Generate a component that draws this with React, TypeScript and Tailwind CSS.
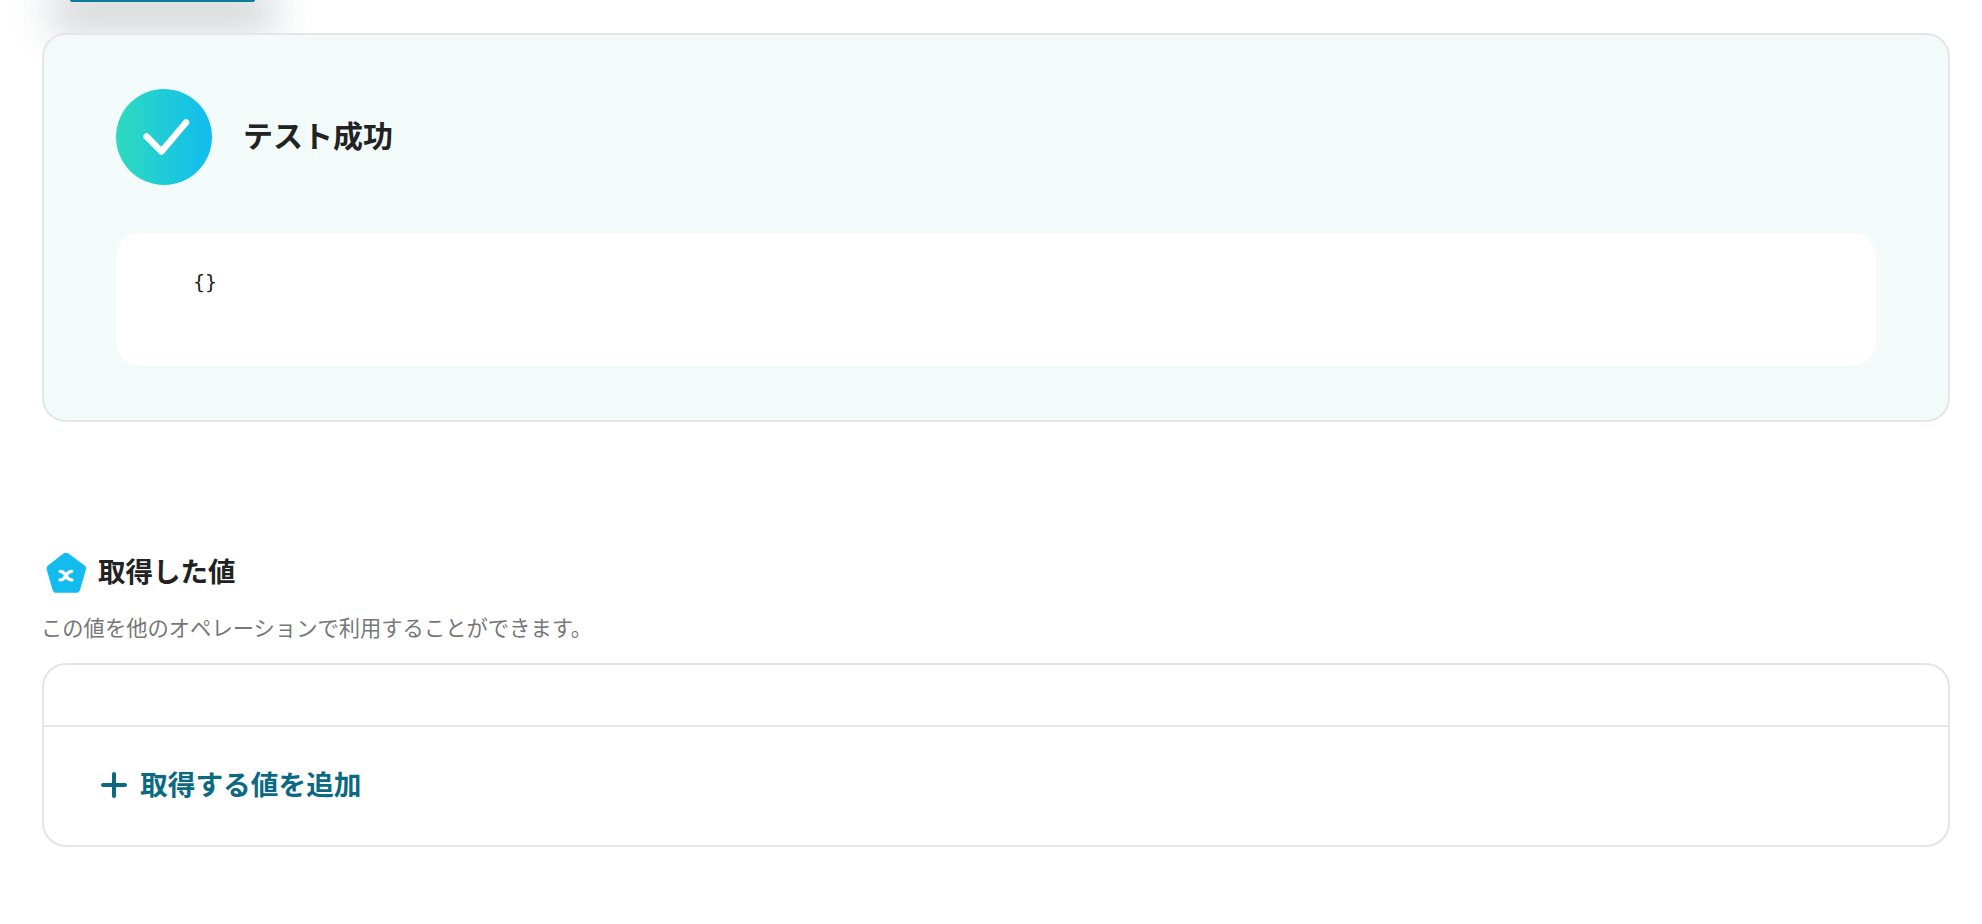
const jp = "font-['Noto_Sans_CJK_JP','Noto_Sans',sans-serif]";

const CheckBadge = () => (
  <div className="flex h-24 w-24 shrink-0 items-center justify-center rounded-full bg-gradient-to-r from-[#2fdabd] to-[#12bcef]">
    <svg width="96" height="96" viewBox="0 0 96 96" fill="none">
      <path d="M30.500 47.500L45.500 62.500L70 33.500" stroke="#fff" strokeWidth="6.500" strokeLinecap="round" strokeLinejoin="round" />
    </svg>
  </div>
);

const VariableIcon = () => (
  <svg width="42" height="42" viewBox="0.600 0.600 39 39" className="shrink-0">
    <path
      d="M18.400 2.200a4.400 4.400 0 0 1 5.200 0l14.400 10.600a4 4 0 0 1 1.400 4.400l-5.300 18.400a4 4 0 0 1-3.800 2.900H12.300a4 4 0 0 1-3.800-2.900L3.200 17.200a4 4 0 0 1 1.400-4.400z"
      fill="#12bcef"
    />
    <path d="M15.500 18.500c3.500 0 4 1.500 5.500 4s2 4 5.500 4M26.500 18.500c-3.500 0-4 1.500-5.500 4s-2 4-5.500 4" stroke="#fff" strokeWidth="3" strokeLinecap="round" fill="none" />
  </svg>
);

export default function App() {
  return (
    <div className={`${jp} h-[924px] w-full overflow-hidden bg-white text-[#222222]`}>
      <div className="ml-[70px] h-0.5 w-[185px] rounded-b-full bg-[#0a7c9a] shadow-[0_10px_40px_20px_rgba(40,60,70,0.22)]" />

      <div className="ml-[42px] mr-[32px] mt-[31px]">
        {/* テスト結果 */}
        <section className="rounded-[24px] border-2 border-[#e5e5e5] bg-[#f2fbf9] px-[72px] pb-[54px] pt-[54px]">
          <div className="flex items-center gap-[31px]">
            <CheckBadge />
            <h2 className="mb-[6px] text-[30px] font-semibold leading-none">テスト成功</h2>
          </div>
          <div className="mt-12 h-[133px] rounded-[24px] bg-white px-[77px] pt-[37px]">
            <pre className="font-['DejaVu_Sans_Mono',monospace] text-[20px] leading-6">{"{}"}</pre>
          </div>
        </section>

        {/* 取得した値 */}
        <section className="mt-[130px]">
          <div className="flex items-center gap-3 pl-[2px]">
            <VariableIcon />
            <h3 className="mb-[5px] text-[27.500px] font-semibold leading-[35px]">取得した値</h3>
          </div>
          <p className="-ml-px mt-[17px] text-[21.300px] leading-8 text-[#777777]">この値を他のオペレーションで利用することができます。</p>
          <div className="mt-5 rounded-[24px] border-2 border-[#e5e5e5]">
            <div className="h-[62px] border-b-2 border-[#e5e5e5]" />
            <button type="button" className="flex h-[118px] items-center gap-3 pb-1 pl-[56px] text-[27.700px] font-semibold text-[#0b6a82]">
              <svg width="28" height="28" viewBox="0 0 28 28" fill="none" stroke="currentColor" strokeWidth="4" strokeLinecap="round" className="mt-0.5">
                <path d="M14 3v22M3 14h22" />
              </svg>
              取得する値を追加
            </button>
          </div>
        </section>
      </div>
    </div>
  );
}
